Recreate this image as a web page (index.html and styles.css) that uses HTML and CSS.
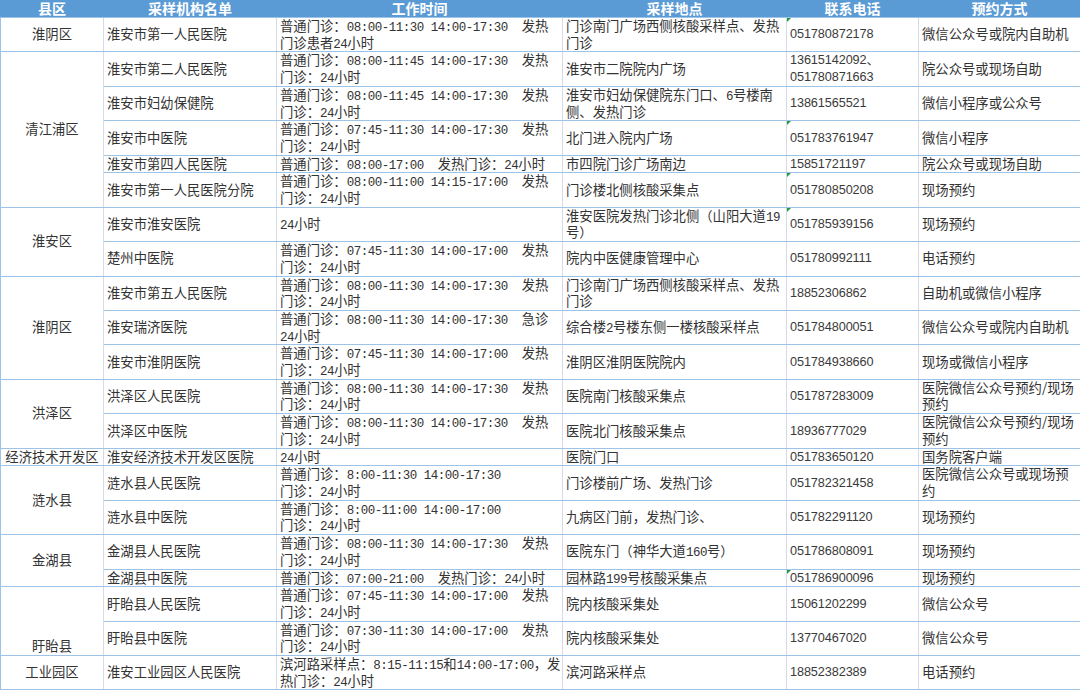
FILE: index.html
```html
<!DOCTYPE html>
<html lang="zh-CN">
<head>
<meta charset="utf-8">
<title>淮安核酸采样机构</title>
<link rel="stylesheet" href="styles.css">
</head>
<body>
<table class="sheet">
  <colgroup>
    <col class="c1"><col class="c2"><col class="c3"><col class="c4"><col class="c5"><col class="c6">
  </colgroup>
  <thead>
    <tr><th>县区</th><th>采样机构名单</th><th>工作时间</th><th>采样地点</th><th>联系电话</th><th>预约方式</th></tr>
  </thead>
  <tbody>
    <tr>
      <td class="area">淮阴区</td>
      <td>淮安市第一人民医院</td>
      <td>普通门诊：<span class="t">08:00-11:30 14:00-17:30&nbsp;&nbsp;</span>发热<br>门诊患者<span class="t">24</span>小时</td>
      <td>门诊南门广场西侧核酸采样点、发热<br>门诊</td>
      <td class="tel g">051780872178</td>
      <td>微信公众号或院内自助机</td>
    </tr>
    <tr>
      <td class="area" rowspan="5">清江浦区</td>
      <td>淮安市第二人民医院</td>
      <td>普通门诊：<span class="t">08:00-11:45 14:00-17:30&nbsp;&nbsp;</span>发热<br>门诊：<span class="t">24</span>小时</td>
      <td>淮安市二院院内广场</td>
      <td class="tel">13615142092、<br>051780871663</td>
      <td>院公众号或现场自助</td>
    </tr>
    <tr>
      <td>淮安市妇幼保健院</td>
      <td>普通门诊：<span class="t">08:00-11:45 14:00-17:30&nbsp;&nbsp;</span>发热<br>门诊：<span class="t">24</span>小时</td>
      <td>淮安市妇幼保健院东门口、<span class="t">6</span>号楼南<br>侧、发热门诊</td>
      <td class="tel">13861565521</td>
      <td>微信小程序或公众号</td>
    </tr>
    <tr>
      <td>淮安市中医院</td>
      <td>普通门诊：<span class="t">07:45-11:30 14:00-17:30&nbsp;&nbsp;</span>发热<br>门诊：<span class="t">24</span>小时</td>
      <td>北门进入院内广场</td>
      <td class="tel g">051783761947</td>
      <td>微信小程序</td>
    </tr>
    <tr>
      <td>淮安市第四人民医院</td>
      <td>普通门诊：<span class="t">08:00-17:00&nbsp;&nbsp;</span>发热门诊：<span class="t">24</span>小时</td>
      <td>市四院门诊广场南边</td>
      <td class="tel">15851721197</td>
      <td>院公众号或现场自助</td>
    </tr>
    <tr>
      <td>淮安市第一人民医院分院</td>
      <td>普通门诊：<span class="t">08:00-11:00 14:15-17:00&nbsp;&nbsp;</span>发热<br>门诊：<span class="t">24</span>小时</td>
      <td>门诊楼北侧核酸采集点</td>
      <td class="tel g">051780850208</td>
      <td>现场预约</td>
    </tr>
    <tr>
      <td class="area" rowspan="2">淮安区</td>
      <td>淮安市淮安医院</td>
      <td><span class="t">24</span>小时</td>
      <td>淮安医院发热门诊北侧（山阳大道<span class="t">19</span><br>号）</td>
      <td class="tel g">051785939156</td>
      <td>现场预约</td>
    </tr>
    <tr>
      <td>楚州中医院</td>
      <td>普通门诊：<span class="t">07:45-11:30 14:00-17:00&nbsp;&nbsp;</span>发热<br>门诊：<span class="t">24</span>小时</td>
      <td>院内中医健康管理中心</td>
      <td class="tel">051780992111</td>
      <td>电话预约</td>
    </tr>
    <tr>
      <td class="area" rowspan="3">淮阴区</td>
      <td>淮安市第五人民医院</td>
      <td>普通门诊：<span class="t">08:00-11:30 14:00-17:30&nbsp;&nbsp;</span>发热<br>门诊：<span class="t">24</span>小时</td>
      <td>门诊南门广场西侧核酸采样点、发热<br>门诊</td>
      <td class="tel">18852306862</td>
      <td>自助机或微信小程序</td>
    </tr>
    <tr>
      <td>淮安瑞济医院</td>
      <td>普通门诊：<span class="t">08:00-11:30 14:00-17:30&nbsp;&nbsp;</span>急诊<br><span class="t">24</span>小时</td>
      <td>综合楼<span class="t">2</span>号楼东侧一楼核酸采样点</td>
      <td class="tel">051784800051</td>
      <td>微信公众号或院内自助机</td>
    </tr>
    <tr>
      <td>淮安市淮阴医院</td>
      <td>普通门诊：<span class="t">07:45-11:30 14:00-17:00&nbsp;&nbsp;</span>发热<br>门诊：<span class="t">24</span>小时</td>
      <td>淮阴区淮阴医院院内</td>
      <td class="tel">051784938660</td>
      <td>现场或微信小程序</td>
    </tr>
    <tr>
      <td class="area" rowspan="2">洪泽区</td>
      <td>洪泽区人民医院</td>
      <td>普通门诊：<span class="t">08:00-11:30 14:00-17:30&nbsp;&nbsp;</span>发热<br>门诊：<span class="t">24</span>小时</td>
      <td>医院南门核酸采集点</td>
      <td class="tel">051787283009</td>
      <td>医院微信公众号预约/现场<br>预约</td>
    </tr>
    <tr>
      <td>洪泽区中医院</td>
      <td>普通门诊：<span class="t">08:00-11:30 14:00-17:30&nbsp;&nbsp;</span>发热<br>门诊：<span class="t">24</span>小时</td>
      <td>医院北门核酸采集点</td>
      <td class="tel">18936777029</td>
      <td>医院微信公众号预约/现场<br>预约</td>
    </tr>
    <tr>
      <td class="area">经济技术开发区</td>
      <td>淮安经济技术开发区医院</td>
      <td><span class="t">24</span>小时</td>
      <td>医院门口</td>
      <td class="tel">051783650120</td>
      <td>国务院客户端</td>
    </tr>
    <tr>
      <td class="area" rowspan="2">涟水县</td>
      <td>涟水县人民医院</td>
      <td>普通门诊：<span class="t">8:00-11:30 14:00-17:30</span><br>门诊：<span class="t">24</span>小时</td>
      <td>门诊楼前广场、发热门诊</td>
      <td class="tel">051782321458</td>
      <td>医院微信公众号或现场预<br>约</td>
    </tr>
    <tr>
      <td>涟水县中医院</td>
      <td>普通门诊：<span class="t">8:00-11:00 14:00-17:00</span><br>门诊：<span class="t">24</span>小时</td>
      <td>九病区门前，发热门诊、</td>
      <td class="tel">051782291120</td>
      <td>现场预约</td>
    </tr>
    <tr>
      <td class="area" rowspan="2">金湖县</td>
      <td>金湖县人民医院</td>
      <td>普通门诊：<span class="t">08:00-11:30 14:00-17:30&nbsp;&nbsp;</span>发热<br>门诊：<span class="t">24</span>小时</td>
      <td>医院东门（神华大道<span class="t">160</span>号）</td>
      <td class="tel">051786808091</td>
      <td>现场预约</td>
    </tr>
    <tr>
      <td>金湖县中医院</td>
      <td>普通门诊：<span class="t">07:00-21:00&nbsp;&nbsp;</span>发热门诊：<span class="t">24</span>小时</td>
      <td>园林路<span class="t">199</span>号核酸采集点</td>
      <td class="tel g">051786900096</td>
      <td>现场预约</td>
    </tr>
    <tr>
      <td class="area bottom" rowspan="2">盱眙县</td>
      <td>盱眙县人民医院</td>
      <td>普通门诊：<span class="t">07:45-11:30 14:00-17:00&nbsp;&nbsp;</span>发热<br>门诊：<span class="t">24</span>小时</td>
      <td>院内核酸采集处</td>
      <td class="tel">15061202299</td>
      <td>微信公众号</td>
    </tr>
    <tr>
      <td>盱眙县中医院</td>
      <td>普通门诊：<span class="t">07:30-11:30 14:00-17:00&nbsp;&nbsp;</span>发热<br>门诊：<span class="t">24</span>小时</td>
      <td>院内核酸采集处</td>
      <td class="tel">13770467020</td>
      <td>微信公众号</td>
    </tr>
    <tr>
      <td class="area">工业园区</td>
      <td>淮安工业园区人民医院</td>
      <td>滨河路采样点：<span class="t">8:15-11:15</span>和<span class="t">14:00-17:00</span>，发<br>热门诊：<span class="t">24</span>小时</td>
      <td>滨河路采样点</td>
      <td class="tel">18852382389</td>
      <td>电话预约</td>
    </tr>
  </tbody>
</table>
</body>
</html>
```
FILE: styles.css
```css
html, body {
  margin: 0;
  padding: 0;
  background: #ffffff;
}

.sheet {
  width: 1080px;
  table-layout: fixed;
  border-collapse: collapse;
  font-family: "Noto Sans CJK SC", "Noto Sans", sans-serif;
  font-size: 13.33px;
  color: #333333;
}

.c1 { width: 103px; }
.c2 { width: 173px; }
.c3 { width: 286px; }
.c4 { width: 224px; }
.c5 { width: 132px; }
.c6 { width: 162px; }

.sheet th {
  background: #5b9bd5;
  color: #ffffff;
  font-weight: 700;
  font-size: 14px;
  line-height: 17px;
  height: 17px;
  padding: 0;
  text-align: center;
  border-bottom: 1px solid #9dc3e6;
  border-left: 1px solid #5b9bd5;
  border-right: 1px solid #5b9bd5;
  white-space: nowrap;
}

.sheet td {
  padding: 0 3px 0 3px;
  height: 16px;
  line-height: 16.7px;
  vertical-align: middle;
  text-align: left;
  white-space: nowrap;
  overflow: hidden;
  border-top: 1px solid #9dc3e6;
  border-bottom: 1px solid #9dc3e6;
  border-left: 1px solid #d3dbe6;
  border-right: 1px solid #d3dbe6;
}

.sheet td:first-child {
  border-left: 1px solid #9dc3e6;
}

.sheet td.area {
  text-align: center;
  padding: 0;
  border-left: 1px solid #9dc3e6;
}

.sheet td.area.bottom {
  vertical-align: bottom;
}

.sheet td.tel {
  font-family: "Liberation Sans", "Noto Sans CJK SC", sans-serif;
  font-size: 12.7px;
  letter-spacing: -0.1px;
  color: #3a3a3a;
  padding-left: 3px;
}

.sheet td.g {
  position: relative;
}

.sheet td.g::before {
  content: "";
  position: absolute;
  top: 0;
  left: 0;
  border-top: 4px solid #1f9a3a;
  border-right: 4px solid transparent;
}

.t {
  font-family: "Liberation Mono", monospace;
  font-size: 12.5px;
  letter-spacing: -0.5px;
  line-height: 8px;
}
```
